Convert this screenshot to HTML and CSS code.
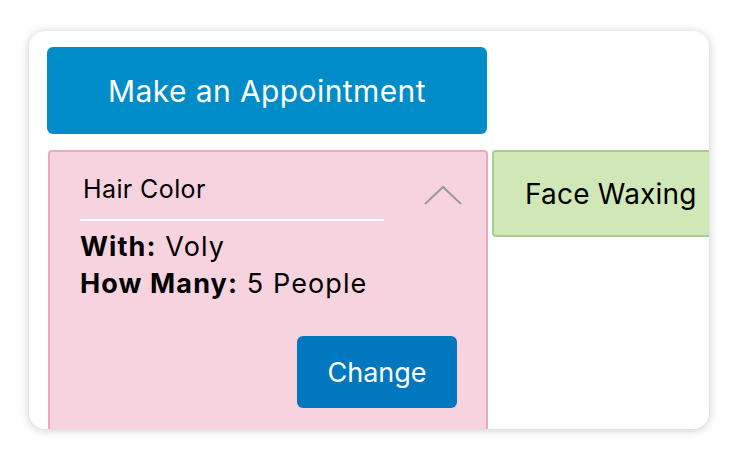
FILE: index.html
```html
<!DOCTYPE html>
<html>
<head>
<meta charset="utf-8">
<link rel="stylesheet" href="styles.css">
</head>
<body>
<div class="frame">
  <div class="card">
    <button class="primary">Make an Appointment</button>
    <div class="row">
      <div class="service pink">
        <div class="service-head">
          <div class="title">Hair Color</div>
          <svg class="chevron" width="38" height="20" viewBox="0 0 38 20">
            <polyline points="1,19 19,2 37,19" fill="none" stroke="#9a9a9a" stroke-width="2"/>
          </svg>
        </div>
        <div class="details">
          <div><b>With:</b> Voly</div>
          <div><b>How Many:</b> 5 People</div>
        </div>
        <div class="actions">
          <button class="change">Change</button>
        </div>
      </div>
      <div class="service green">
        <span>Face Waxing</span>
      </div>
    </div>
  </div>
</div>
</body>
</html>
```
FILE: styles.css
```css
html, body {
  margin: 0;
  padding: 0;
  background: #ffffff;
}
body {
  font-family: "Inter", "Liberation Sans", sans-serif;
  color: #000;
}
.frame {
  padding: 31px 28px 33px 29px;
}
.card {
  height: 398px;
  background: #fff;
  border-radius: 16px;
  box-shadow: 0 1px 10px rgba(0, 0, 0, 0.22);
  overflow: hidden;
  padding: 16px 0 0 18px;
  box-sizing: border-box;
}
.primary {
  display: block;
  width: 440px;
  height: 87px;
  border: none;
  border-radius: 6px;
  background: #008cc9;
  color: #fff;
  font-family: inherit;
  font-size: 30px;
  letter-spacing: 0.4px;
  font-weight: 400;
  padding: 0;
  margin: 0;
}
.row {
  display: flex;
  gap: 4px;
  margin-top: 16px;
  margin-left: 1px;
  align-items: flex-start;
}
.service {
  flex: none;
  box-sizing: border-box;
  border-radius: 4px;
}
.pink {
  width: 440px;
  height: 320px;
  background: #f7d3e0;
  border: 2px solid #eba9c0;
  padding: 17px 29px 0 30px;
}
.service-head {
  display: flex;
  align-items: flex-start;
  justify-content: space-between;
}
.title {
  width: 304px;
  font-size: 25px;
  letter-spacing: 0.4px;
  line-height: 30px;
  padding: 5px 0 0 3px;
  border-bottom: 2px solid #fff;
  box-sizing: border-box;
  height: 52px;
}
.chevron {
  margin-top: 16px;
  margin-right: -5px;
}
.details {
  margin-top: 7px;
  font-size: 27px;
  letter-spacing: 1.1px;
  line-height: 37px;
}
.details b {
  font-weight: 700;
}
.actions {
  display: flex;
  justify-content: flex-end;
  margin-top: 34px;
}
.change {
  width: 160px;
  height: 72px;
  border: none;
  border-radius: 6px;
  background: #0077be;
  color: #fff;
  font-family: inherit;
  font-size: 27px;
  padding: 0;
}
.green {
  width: 240px;
  height: 87px;
  background: #d0e8b8;
  border: 2px solid #a9cd8b;
  display: flex;
  align-items: center;
  padding-left: 31px;
  font-size: 28px;
  letter-spacing: 0.2px;
}
```
